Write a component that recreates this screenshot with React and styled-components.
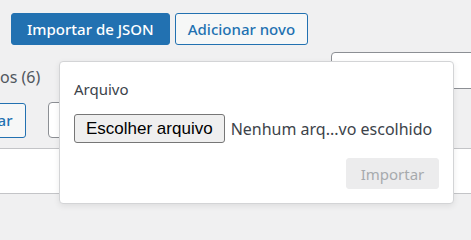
import React from "react";
import styled, { createGlobalStyle } from "styled-components";

const GlobalStyle = createGlobalStyle`
  html, body {
    margin: 0;
    padding: 0;
    background: #f0f0f1;
    overflow: hidden;
  }
  body {
    font-family: "Noto Sans", "Open Sans", sans-serif;
    color: #3c434a;
  }
`;

const Page = styled.div`
  position: relative;
  width: 471px;
  height: 225px;
  overflow: hidden;
`;

const Header = styled.div`
  display: flex;
  align-items: center;
  gap: 5px;
  padding: 13px 0 0 11px;
`;

const Button = styled.button`
  flex-shrink: 0;
  height: ${(p) => p.$h || 32}px;
  padding: 0 ${(p) => p.$px || 12}px;
  border-radius: 3px;
  font-family: "Noto Sans", sans-serif;
  font-size: 15px;
  font-weight: 500;
  line-height: 1;
  cursor: pointer;
  border: 1px solid #2271b1;
  background: ${(p) => (p.$primary ? "#2271b1" : "#f6f7f7")};
  color: ${(p) => (p.$primary ? "#ffffff" : "#2271b1")};
  margin-left: ${(p) => p.$ml || 0}px;
`;

const ViewsRow = styled.div`
  display: flex;
  align-items: flex-start;
  justify-content: space-between;
  margin-top: 7px;
`;

const Views = styled.span`
  margin-top: 14px;
  font-size: 16px;
  color: #50575e;
`;

const Search = styled.div`
  width: 160px;
  height: 35px;
  margin-right: -22px;
  background: #fff;
  border: 1px solid #8c8f94;
  border-radius: 4px 0 0 0;
`;

const Tablenav = styled.div`
  display: flex;
  align-items: center;
  gap: 22px;
  margin-top: 13px;
`;

const Select = styled.div`
  flex-shrink: 0;
  width: 120px;
  height: 34px;
  background: #fff;
  border: 1px solid #8c8f94;
  border-radius: 4px;
`;

const TableHead = styled.div`
  margin-top: 10px;
  height: 44px;
  background: #fff;
  border-top: 1px solid #c3c4c7;
  border-bottom: 1px solid #c3c4c7;
`;

const Popover = styled.div`
  position: absolute;
  left: 59px;
  top: 61px;
  width: 365px;
  padding: 14px;
  background: #fff;
  border: 1px solid #d3d4d6;
  border-radius: 4px;
  box-shadow: 0 2px 6px rgba(0, 0, 0, 0.08);
  display: flex;
  flex-direction: column;
`;

const Label = styled.div`
  font-size: 15px;
  line-height: 22px;
  margin-top: 2px;
  color: #3c434a;
`;

const FileRow = styled.div`
  display: flex;
  align-items: center;
  gap: 6px;
  margin-top: 14px;
`;

const FileButton = styled.button`
  flex-shrink: 0;
  height: 29px;
  padding: 0 11px;
  font-family: "Liberation Sans", Arial, sans-serif;
  font-size: 17px;
  color: #000;
  background: #efefef;
  border: 1px solid #767676;
  border-radius: 3px;
`;

const FileName = styled.span`
  font-size: 16px;
  color: #3c434a;
  white-space: nowrap;
`;

const Footer = styled.div`
  display: flex;
  justify-content: flex-end;
  margin-top: 15px;
`;

const Disabled = styled.button`
  height: 31px;
  width: 93px;
  font-family: "Noto Sans", sans-serif;
  font-size: 15px;
  color: #a7aaad;
  background: #ececed;
  border: 1px solid #ececed;
  border-radius: 3px;
`;

export default function App() {
  return (
    <Page>
      <GlobalStyle />
      <Header>
        <Button $primary $px={15}>Importar de JSON</Button>
        <Button $px={12}>Adicionar novo</Button>
      </Header>
      <ViewsRow>
        <Views>os (6)</Views>
        <Search />
      </ViewsRow>
      <Tablenav>
        <Button $h={35} $ml={-50} $px={12}>Aplicar</Button>
        <Select />
      </Tablenav>
      <TableHead />

      <Popover>
        <Label>Arquivo</Label>
        <FileRow>
          <FileButton>Escolher arquivo</FileButton>
          <FileName>Nenhum arq...vo escolhido</FileName>
        </FileRow>
        <Footer>
          <Disabled disabled>Importar</Disabled>
        </Footer>
      </Popover>
    </Page>
  );
}
